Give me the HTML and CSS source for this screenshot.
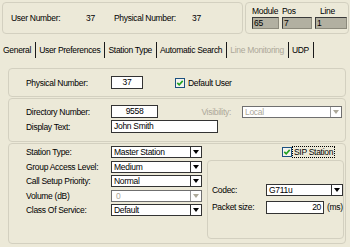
FILE: index.html
```html
<!DOCTYPE html>
<html lang="en">
<head>
  <meta charset="UTF-8" />
  <title>User Settings</title>
  <link rel="stylesheet" href="styles.css">
</head>
<body>

<div class="header">
  <div class="hbox info">
    <span class="stat-label w75">User Number:</span>
    <span class="w28">37</span>
    <span class="stat-label w78">Physical Number:</span>
    <span>37</span>
  </div>
  <div class="hbox pos">
    <span class="pos-lbl">Module</span>
    <span class="pos-lbl">Pos</span>
    <span class="pos-lbl line-lbl">Line</span>
    <span class="ro">65</span>
    <span class="ro">7</span>
    <span class="ro">1</span>
  </div>
</div>

<div class="tabs">
  <span class="tab first">General</span>
  <span class="tab">User Preferences</span>
  <span class="tab">Station Type</span>
  <span class="tab">Automatic Search</span>
  <span class="tab off">Line Monitoring</span>
  <span class="tab">UDP</span>
</div>

<div class="panel">
  <!-- physical number -->
  <div class="grp g1">
    <span class="lbl">Physical Number:</span>
    <span class="field center w32">37</span>
    <span class="check default-user">
      <svg class="cb" viewBox="0 0 10 10" width="10" height="10"><rect x="0.5" y="0.5" width="9" height="9" fill="#f3f3ee" stroke="#1c5180"/><path d="M2.3 4.9 L4.2 6.9 L7.7 2.9" fill="none" stroke="#21a121" stroke-width="1.6"/></svg>
      Default User
    </span>
  </div>

  <!-- directory -->
  <div class="grp g2">
    <div class="row">
      <span class="lbl">Directory Number:</span>
      <span class="field center w47">9558</span>
      <span class="vis-lbl">Visibility:</span>
      <div class="combo disabled w100"><span class="val">Local</span><span class="btn"></span></div>
    </div>
    <div class="row">
      <span class="lbl">Display Text:</span>
      <span class="field w107">John Smith</span>
    </div>
  </div>

  <!-- station -->
  <div class="grp g3">
    <div class="station-col">
      <span class="lbl">Station Type:</span>
      <div class="combo"><span class="val">Master Station</span><span class="btn"></span></div>
      <span class="lbl">Group Access Level:</span>
      <div class="combo"><span class="val">Medium</span><span class="btn"></span></div>
      <span class="lbl">Call Setup Priority:</span>
      <div class="combo"><span class="val">Normal</span><span class="btn"></span></div>
      <span class="lbl">Volume (dB)</span>
      <div class="combo disabled"><span class="val">&nbsp;0</span><span class="btn"></span></div>
      <span class="lbl">Class Of Service:</span>
      <div class="combo"><span class="val">Default</span><span class="btn"></span></div>
    </div>
    <div class="sip-col">
      <span class="check sip">
        <svg class="cb" viewBox="0 0 10 10" width="10" height="10"><rect x="0.5" y="0.5" width="9" height="9" fill="#f3f3ee" stroke="#1c5180"/><path d="M2.3 4.9 L4.2 6.9 L7.7 2.9" fill="none" stroke="#21a121" stroke-width="1.6"/></svg>
        <span class="focus">SIP Station</span>
      </span>
      <div class="sip-box">
        <div class="sip-row">
          <span class="sip-lbl">Codec:</span>
          <div class="combo w77"><span class="val">G711u</span><span class="btn"></span></div>
        </div>
        <div class="sip-row packet">
          <span class="sip-lbl">Packet size:</span>
          <span class="field right w58">20</span>
          <span class="unit">(ms)</span>
        </div>
      </div>
    </div>
  </div>
</div>

</body>
</html>
```

FILE: styles.css
```css
* {
  box-sizing: border-box;
}

body {
  margin: 0;
  width: 350px;
  height: 247px;
  overflow: hidden;
  background: #ece9d8;
  font-family: "Liberation Sans", Arial, sans-serif;
  font-size: 8.5px;
  letter-spacing: -0.3px;
  color: #000;
}

/* header boxes */
.header {
  display: flex;
  gap: 2px;
  height: 34px;
  padding: 2px 1px 0 2px;
}

.hbox {
  border: 1px solid #d3d0c0;
  border-radius: 4px;
}

.info {
  width: 241px;
  display: flex;
  align-items: center;
  padding-left: 8px;
}

.w75 { width: 75px; }
.w28 { width: 28px; }
.w78 { width: 78px; }

.pos {
  flex: 1;
  display: grid;
  grid-template-columns: 27px 30px 32px;
  column-gap: 3px;
  align-content: start;
  padding: 3px 0 0 6px;
}

.pos-lbl {
  height: 10px;
  line-height: 10px;
}

.line-lbl {
  padding-left: 5px;
}

.ro {
  height: 12px;
  margin-top: 1px;
  line-height: 10px;
  padding-left: 1px;
  background: #b2b0a1;
  border: 1px solid #3a3a3a;
  border-right-color: #8c8a7c;
  border-bottom-color: #8c8a7c;
}

/* tabs */
.tabs {
  display: flex;
  height: 16px;
  margin-top: 8px;
  padding-left: 3px;
}

.tab {
  line-height: 16px;
  padding: 0 4px 0 3px;
  border-right: 1px solid #1a1a1a;
}

.tab.first {
  padding-left: 0;
}

.tab.off {
  color: #aca899;
}

/* panel */
.panel {
  display: flex;
  flex-direction: column;
  gap: 1px;
  padding: 10px 4px 0 8px;
}

.grp {
  border: 1px solid #d3d0c0;
  border-radius: 4px;
}

.lbl {
  width: 85px;
  white-space: nowrap;
}

.field {
  height: 13px;
  line-height: 11px;
  padding: 0 2px;
  background: #fff;
  border: 1px solid #333;
  white-space: nowrap;
}

.center { text-align: center; }
.right { text-align: right; }

.w32 { width: 32px; }
.w47 { width: 47px; }
.w58 { width: 58px; }
.w77 { width: 77px; }
.w100 { width: 100px; }
.w107 { width: 107px; }

.g1 {
  height: 29px;
  display: flex;
  align-items: center;
  padding-left: 17px;
}

.check {
  display: flex;
  align-items: center;
  gap: 3px;
  white-space: nowrap;
}

.cb {
  display: block;
  flex: none;
}

.default-user {
  margin-left: 32px;
}

.g2 {
  height: 44px;
  display: flex;
  flex-direction: column;
  gap: 2px;
  padding: 6px 3px 0 17px;
}

.row {
  display: flex;
  align-items: center;
  height: 13px;
}

.vis-lbl {
  flex: 1;
  text-align: right;
  padding-right: 11px;
  color: #aca899;
}

/* combo boxes */
.combo {
  display: flex;
  height: 12px;
  background: #fff;
  border: 1px solid #333;
}

.combo .val {
  flex: 1;
  padding-left: 2px;
  line-height: 10px;
  white-space: nowrap;
}

.combo .btn {
  width: 11px;
  border-left: 1px solid #333;
  display: flex;
  align-items: center;
  justify-content: center;
}

.combo .btn::after {
  content: "";
  border-left: 3px solid transparent;
  border-right: 3px solid transparent;
  border-top: 4px solid #000;
}

.combo.disabled {
  border-color: #6f6f6f;
}

.combo.disabled .val {
  color: #aca899;
}

.combo.disabled .btn {
  border-left-color: #9a9a9a;
}

.combo.disabled .btn::after {
  border-top-color: #aca899;
}

.g3 {
  height: 101px;
  display: flex;
  padding: 2px 1px 4px 17px;
}

.station-col {
  width: 176px;
  display: grid;
  grid-template-columns: 85px 91px;
  grid-auto-rows: 12px;
  row-gap: 2.5px;
  align-items: center;
  align-content: start;
}

.sip-col {
  flex: 1;
  display: flex;
  flex-direction: column;
  margin-left: 5px;
}

.sip {
  height: 11px;
  margin-left: 75px;
  gap: 1px;
}

.focus {
  outline: 1px dotted #000;
  padding: 0 1px;
  line-height: 10px;
}

.sip-box {
  flex: 1;
  margin-top: 3px;
  padding: 23px 0 0 4px;
  border: 1px solid #d3d0c0;
  border-radius: 4px;
}

.sip-row {
  display: flex;
  align-items: center;
  height: 12px;
}

.sip-row.packet {
  margin-top: 5px;
}

.sip-lbl {
  width: 54px;
}

.unit {
  margin-left: 3px;
}
```
